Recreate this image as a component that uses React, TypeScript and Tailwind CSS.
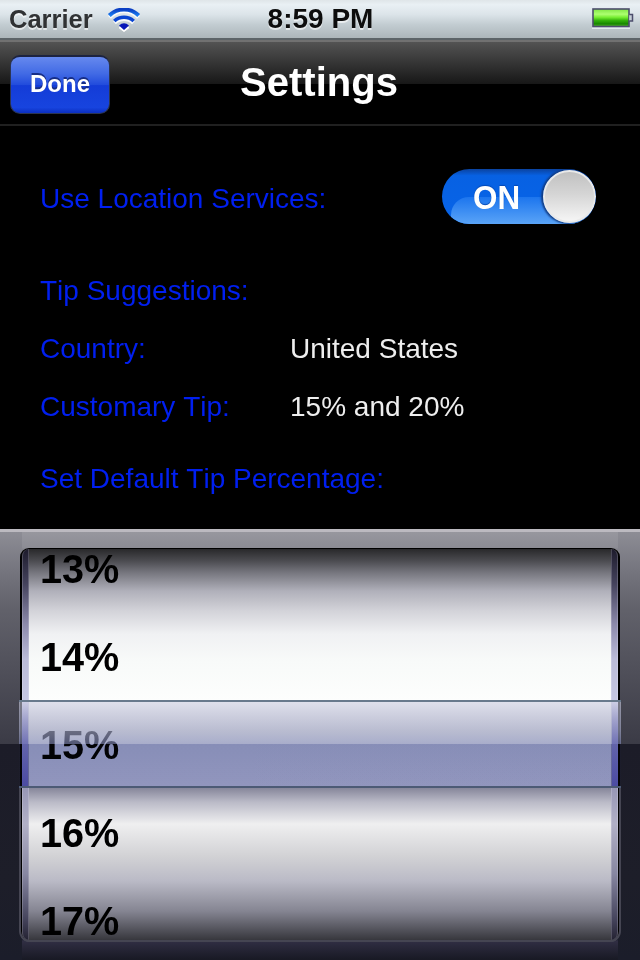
import React from "react";

const percentages = ["13%", "14%", "15%", "16%", "17%"];

function WifiIcon() {
  return (
    <svg className="ml-[14px] mt-[8px] h-[26px] w-[34px]" viewBox="0 0 34 26" fill="none">
      <g transform="translate(0 1.8)" stroke="#fff" strokeOpacity="0.85" fill="none">
        <path d="M2.500 7.500C10.500-.8 23.500-.8 31.500 7.500" strokeWidth="4" />
        <path d="M7.500 13C13 8 21 8 26.500 13" strokeWidth="4" />
        <path d="M12 18Q17 13.500 22 18L17 21.800Z" fill="#fff" />
      </g>
      <path d="M2.300 7.500C10.500-.5 23.500-.5 31.700 7.500" stroke="url(#wave)" strokeWidth="4" />
      <path d="M7.300 13C13 8 21 8 26.700 13" stroke="#0a45d2" strokeWidth="3.600" />
      <path d="M12 17.500Q17 13 22 17.500L17 22Z" fill="#0717b8" />
      <defs>
        <linearGradient id="wave" x1="0" y1="0" x2="0" y2="1">
          <stop stopColor="#0a3fc4" />
          <stop offset="1" stopColor="#1b7df0" />
        </linearGradient>
      </defs>
    </svg>
  );
}

function BatteryIcon() {
  return (
    <svg className="h-[24px] w-[44px]" viewBox="0 0 44 24">
      <defs>
        <linearGradient id="charge" x1="0" y1="0" x2="0" y2="1">
          <stop stopColor="#7fe743" />
          <stop offset=".3" stopColor="#adff70" />
          <stop offset=".48" stopColor="#75ed31" />
          <stop offset=".65" stopColor="#35b30c" />
          <stop offset=".85" stopColor="#168600" />
          <stop offset="1" stopColor="#55b52d" />
        </linearGradient>
      </defs>
      <path d="M1 21h38" stroke="#e3eaef" strokeWidth="2" />
      <rect x="2" y="2" width="36" height="17.500" fill="url(#charge)" stroke="#4c4d6c" strokeWidth="1.600" />
      <path d="M38.200 7.500h3.300v6.500h-3.300" fill="#c5ced6" stroke="#4c4d6c" strokeWidth="1.500" />
    </svg>
  );
}

function StatusBar() {
  return (
    <header className="grid h-10 grid-cols-3 border-b-2 border-[#5c6468] bg-[linear-gradient(#dfe5e8,#e9f0f4_12%,#dce4e9_38%,#c2ccd1_65%,#acb6ba)]">
      <div className="flex pl-[9px] text-[25.5px] leading-[38px] font-bold text-[#303234] [text-shadow:0_2px_0_#ffffff99]">
        <span>Carrier</span>
        <WifiIcon />
      </div>
      <div className="pl-px text-center text-[28px] leading-[38px] font-bold text-[#0d0d0d] [text-shadow:0_2px_0_#ffffff99]">8:59 PM</div>
      <div className="flex justify-end pt-[7px] pr-[5px]">
        <BatteryIcon />
      </div>
    </header>
  );
}

function NavigationBar() {
  return (
    <nav className="grid h-[86px] grid-cols-[120px_1fr_120px] border-t-2 border-b-2 border-t-[#717171] border-b-[#202020] bg-[linear-gradient(#535353_0,#171717_42px,#000_42px)]">
      <button className="mt-[13px] ml-[10px] flex h-[59px] w-[100px] justify-center rounded-[10px] border border-[#2b3552] border-t-2 border-t-[#1c2340] bg-[linear-gradient(#6689ee,#416ae5_30%,#214bdc_50%,#143cd7_51%,#1744df_90%,#0b2fc0)] text-[24px] leading-[54px] font-bold text-white [text-shadow:0_-2px_0_#172e86]">Done</button>
      <h1 className="pt-[16px] pr-[2px] text-center text-[40px] leading-[48px] font-bold text-white">Settings</h1>
    </nav>
  );
}

function LocationSwitch() {
  return (
    <button role="switch" aria-checked="true" className="relative h-[55px] w-[154px] overflow-hidden rounded-full bg-[linear-gradient(#0a43a0,#0761e3_12%,#0764e8)] text-left">
      <div className="absolute top-[28px] left-[9px] h-[27px] w-[140px] rounded-tl-[18px] bg-[linear-gradient(#1c75ee,#5aa4f7)]" />
      <span className="relative block pl-[31px] text-[33px] leading-[58px] font-bold text-white [text-shadow:0_-1px_1px_#0549b5]"><span className="inline-block origin-left scale-x-95">ON</span></span>
      <div className="absolute top-[1px] right-0 h-[53px] w-[53px] rounded-full border-2 border-[#e9e9e9] bg-[linear-gradient(#c1c1c1,#d5d5d5_45%,#f5f5f5)] shadow-[-1px_0_2px_1px_#123b80]" />
    </button>
  );
}

function Field({ label, value }: { label: string; value?: string }) {
  return (
    <div className="flex h-8 text-[28px] leading-8 [font-kerning:none]">
      <span className="w-[250px] whitespace-nowrap text-[#001ff0]">{label}</span>
      <span className="whitespace-nowrap text-[#eeeeee]">{value}</span>
    </div>
  );
}

function WheelEdge() {
  return <div className="w-[7px] shrink-0 border-x border-x-[#ffffff30] bg-[linear-gradient(#1d1b2c,#45435d_35px,#8b89aa_75px,#babbd8_110px,#c6c8e2_152px,#9797b6_240px,#b1b0c6_275px,#8787a1_325px,#45445c_370px,#242232)] first:rounded-l-[7px] last:rounded-r-[7px]" />;
}

function PercentagePicker() {
  return (
    <section className="h-[431px] border-t-[3px] border-[#bcbac0] bg-[linear-gradient(#8d8d95_0,#777780_35px,#62626b_75px,#52525c_130px,#3b3b46_212px,#1c1c28_212px,#1d1e29_350px,#1b1d2a)]">
      <div className="mx-[22px] h-[428px] bg-[linear-gradient(#97979e_0,#8c8c94_16px,transparent_17px,transparent_407px,#302e43_409px,#191a25_427px)] pt-[15px]">
        <div className="relative -mx-[3px] h-[395px] rounded-[11px] border border-transparent border-b-[#4d4d5c] border-b-2">
          <div className="flex h-[392px] rounded-[9px] border-x-2 border-t border-black bg-[linear-gradient(#29292b_0,#4c4c51_12px,#74747c_23px,#b0b0ba_42px,#d3d3d9_62px,#f0f1f3_85px,#f8faf9_112px,#fdfefd_152px,#fff_238px,#86869a_239px,#babac7_253px,#efeff0_275px,#d2d2d5_307px,#babac6_332px,#858592_362px,#37373d_391px)]">
            <WheelEdge />
            <ol className="flex flex-1 flex-col gap-12 pl-[11px]">
              {percentages.map((value) => (
                <li key={value} className="h-10 text-[40px] leading-[40px] font-bold text-black"><span className="inline-block origin-left scale-x-[0.99]">{value}</span></li>
              ))}
            </ol>
            <WheelEdge />
          </div>
          <div className="absolute -right-px bottom-[-2px] -left-px h-[155px] rounded-b-[11px] border-2 border-t-0 border-[#454552]" />
          <div className="absolute top-[196px] right-px left-px h-[42px] bg-[linear-gradient(#8f95bf,#999dc5)] mix-blend-multiply" />
          <div className="absolute top-[152px] -right-px -left-px flex h-[88px] justify-between border-y-2 border-t-[#68798c] border-b-[#4c5a75] bg-[linear-gradient(#cacbdf99_0,#9ca0bdb0_28px,#7c83b0a8_42px,#20285010_42px,#20285010_84px)] px-[3px]">
            <div className="w-[6px] bg-[linear-gradient(#d5d5ee50,#6666b5aa_40px,#4848a8d0)]" />
            <div className="w-[6px] bg-[linear-gradient(#d5d5ee50,#6666b5aa_40px,#4848a8d0)]" />
          </div>
        </div>
      </div>
    </section>
  );
}

export default function App() {
  return (
    <div className="h-[960px] w-[640px] overflow-hidden bg-black font-['Liberation_Sans',Arial,sans-serif]">
      <StatusBar />
      <NavigationBar />
      <main className="h-[403px] pt-[43px] pr-[44px] pl-[40px]">
        <div className="flex justify-between">
          <div className="pt-[14px]"><Field label="Use Location Services:" /></div>
          <LocationSwitch />
        </div>
        <div className="mt-[51px] flex flex-col gap-[26px]">
          <Field label="Tip Suggestions:" />
          <Field label="Country:" value="United States" />
          <Field label="Customary Tip:" value="15% and 20%" />
        </div>
        <div className="mt-10"><Field label="Set Default Tip Percentage:" /></div>
      </main>
      <PercentagePicker />
    </div>
  );
}
